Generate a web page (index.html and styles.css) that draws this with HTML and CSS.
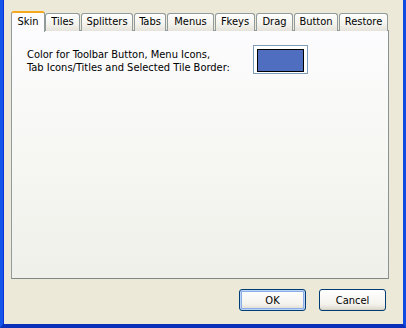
FILE: index.html
```html
<!DOCTYPE html>
<html>
<head>
<meta charset="utf-8">
<link rel="stylesheet" href="styles.css">
</head>
<body>
<div class="window">
  <div class="client">
    <div class="tabs">
      <div class="tab selected">Skin</div>
      <div class="tab">Tiles</div>
      <div class="tab">Splitters</div>
      <div class="tab">Tabs</div>
      <div class="tab">Menus</div>
      <div class="tab">Fkeys</div>
      <div class="tab">Drag</div>
      <div class="tab">Button</div>
      <div class="tab">Restore</div>
    </div>
    <div class="panel">
      <div class="setting">
        <div class="label">Color for Toolbar Button, Menu Icons,<br>Tab Icons/Titles and Selected Tile Border:</div>
        <div class="swatch"><div class="swatch-fill"></div></div>
      </div>
    </div>
    <div class="buttons">
      <button class="btn default">OK</button>
      <button class="btn">Cancel</button>
    </div>
  </div>
</div>
</body>
</html>
```
FILE: styles.css
```css
html, body {
  margin: 0;
  padding: 0;
}
body {
  width: 406px;
  height: 328px;
  overflow: hidden;
  font-family: "DejaVu Sans Condensed", "DejaVu Sans", sans-serif;
  font-size: 11px;
  color: #000;
}
.window {
  box-sizing: border-box;
  width: 406px;
  height: 328px;
  background: #ECE9D8;
  border-left: 3px solid #1456EA;
  border-right: 3px solid #0F4BE0;
  border-bottom: 4px solid #0A2FB8;
  box-shadow: inset 1px 0 0 #0831D9;
}
.client {
  padding: 11px 14px 0 8px;
  display: flex;
  flex-direction: column;
}
.tabs {
  display: grid;
  grid-template-columns: 34px 36px 53px 33px 48px 41px 38px 45px 50px;
  align-items: end;
  height: 20px;
  position: relative;
  z-index: 1;
  margin-bottom: -1px;
}
.tab {
  box-sizing: border-box;
  height: 18px;
  margin-bottom: 1px;
  margin-right: 1px;
  border: 1px solid #919B9C;
  border-bottom: none;
  border-radius: 3px 3px 0 0;
  background: linear-gradient(#FFFFFF, #F3F2EC 60%, #E5E3DA);
  text-align: center;
  line-height: 16px;
  white-space: nowrap;
}
.tab.selected {
  height: 21px;
  margin-bottom: 0;
  margin-right: 0;
  border-top: 2px solid #F4A81D;
  background: #FCFCFE;
  line-height: 17px;
  border-radius: 3px 3px 0 0;
}
.panel {
  box-sizing: border-box;
  height: 249px;
  border: 1px solid #919B9C;
  border-right-color: #8A9394;
  border-bottom-color: #7F8788;
  background: linear-gradient(#FCFCFE, #F6F6F2 55%, #F0F0EA);
  padding: 15px 15px 0 15px;
}
.setting {
  display: grid;
  grid-template-columns: 226px 55px;
}
.label {
  line-height: 13px;
  padding-top: 2px;
}
.swatch {
  box-sizing: border-box;
  width: 55px;
  height: 29px;
  border: 1px solid #7F9DB9;
  background: #FFFFFF;
  padding: 3px;
  margin-top: -1px;
}
.swatch-fill {
  box-sizing: border-box;
  width: 47px;
  height: 23px;
  border: 1px solid #000;
  background: #4F6EC0;
}
.buttons {
  display: flex;
  justify-content: flex-end;
  gap: 13px;
  margin-top: 10px;
  padding-right: 3px;
}
.btn {
  box-sizing: border-box;
  width: 67px;
  height: 22px;
  border: 1px solid #003C74;
  border-radius: 3px;
  background: linear-gradient(#FFFFFF, #F4F3EE 70%, #DCD8CC);
  font-family: "DejaVu Sans Condensed", "DejaVu Sans", sans-serif;
  font-size: 11px;
  color: #000;
  padding: 0;
  box-shadow: inset 0 -1px 0 #D6D0C5;
}
.btn.default {
  box-shadow: inset 0 0 0 1px #BCD4F6, inset 0 0 0 2px #89ADE4;
}
```
